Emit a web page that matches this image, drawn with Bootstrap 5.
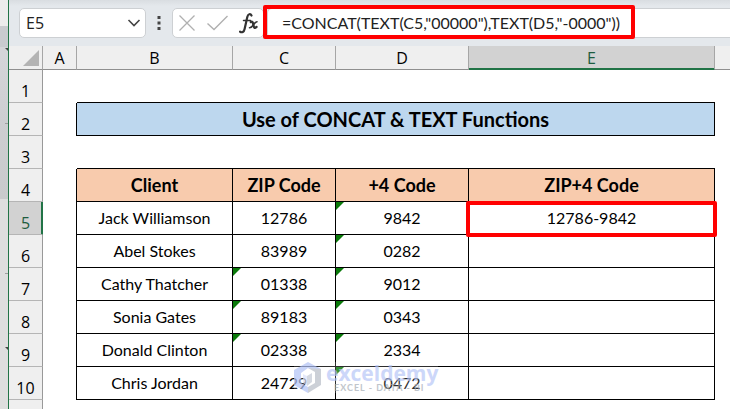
<!DOCTYPE html>
<html lang="en">
<head>
<meta charset="utf-8">
<meta name="viewport" content="width=device-width, initial-scale=1">
<title>Use of CONCAT &amp; TEXT Functions</title>
<link href="https://cdn.jsdelivr.net/npm/bootstrap@5.3.0/dist/css/bootstrap.min.css" rel="stylesheet">
<style>
  body { font-family: Lato, "Liberation Sans", sans-serif; font-size: 16px; line-height: 20px; color: #000; background: #fff; }
  .behind { width: 8px; background: linear-gradient(#ececec 0 26px, #c9cbcf 26px 47px, #d4d5d8 47px 56px, #cdced1 120px, #c9cacc 199px, #dedede 199px); }
  .behind i { position: absolute; right: 0; width: 3px; height: 1px; background: #a0a0a0; }
  .behind i.tip { height: 3px; background: #444; clip-path: polygon(0 0, 100% 0, 100% 100%); }
  .app { border-left: 1px solid #217346; }
  .bar { background: linear-gradient(#d9dde1, #e4e8ec 6px); height: 46px; padding: 8px 0 8px 10px; }
  .field { height: 30px; background: #fff; border: 1px solid #cdd0d3; border-radius: 5px; }
  .namebox { width: 127px; }
  .field input { font-size: 16px; line-height: 20px; color: #222; outline: 0; min-width: 0; }
  .namebox input { font-family: "Open Sans", sans-serif; padding: 0 0 0 6px; }
  .grip { width: 26px; }
  .tools { width: 92px; padding: 0 5px 0 6px; }
  .formula { border-radius: 5px 0 0 5px; margin-left: 3px; }
  .formula input { padding: 0 0 0 14px; }
  .callout { position: absolute; border: 4px solid #f00; border-radius: 2px; pointer-events: none; }
  .formula .callout { left: -5px; top: -4px; width: 372px; height: 34px; }
  .sheet { table-layout: fixed; border-collapse: separate; border-spacing: 0; }
  .sheet th, .sheet td { padding: 0; height: 33px; text-align: center; vertical-align: middle; white-space: nowrap; font-weight: 400; position: relative; }
  .sheet thead th { height: 24px; background: #efefef; border-right: 1px solid #a6a6a6; border-bottom: 1px solid #8f8f8f; font-family: "Open Sans", sans-serif; line-height: 20px; }
  .sheet thead th:last-child { border-right: 0; }
  .sheet tbody th.rownum { background: #efefef; border-right: 1px solid #999; border-bottom: 1px solid #b5b5b5; padding-bottom: 1px; font-family: "Open Sans", sans-serif; vertical-align: bottom; }
  .sheet thead th.on { background: #d2d2d2; color: #1e5c40; border-bottom-color: #217346; box-shadow: inset 0 -1px #217346; }
  .sheet tbody th.on { background: #d2d2d2; color: #1e5c40; border-right-color: #217346; box-shadow: inset -1px 0 #217346; }
  .sheet tbody .rest th, .sheet tbody .rest td { height: 9px; border-bottom: 0; }
  .sheet .cel, .sheet .hd { border-right: 1px solid #000; border-bottom: 1px solid #000; }
  .sheet .over { border-bottom: 1px solid #000; }
  .sheet .side { border-right: 1px solid #000; }
  .sheet .ttl { background: #bdd7ee; border-right: 1px solid #000; border-bottom: 1px solid #000; font-size: 20px; font-weight: 700; }
  .sheet .hd { background: #f8cbad; font-size: 18px; font-weight: 700; }
  .flag::before { content: ""; position: absolute; left: 0; top: 0; border-top: 8px solid #0a7a0a; border-right: 8px solid transparent; }
  .corner svg { position: absolute; right: 3px; bottom: 3px; }
  td .callout { inset: -1px -3px -3px -3px; z-index: 1; }
  .brand { position: absolute; left: 285px; top: 316px; opacity: .72; color: #b9c8f8; background: rgba(255,255,255,.25); pointer-events: none; }
  .brand b { font-family: "Open Sans", sans-serif; font-size: 21px; line-height: 20px; }
  .brand small { font-size: 9px; line-height: 9px; color: #a9afb8; font-weight: 700; letter-spacing: 1px; }
</style>
<script src="https://cdn.jsdelivr.net/npm/bootstrap@5.3.0/dist/js/bootstrap.bundle.min.js"></script>
</head>
<body>
<div class="d-flex min-vh-100 overflow-hidden">
  <div class="behind position-relative flex-shrink-0">
    <i class="tip" style="top:48px"></i><i style="top:123px"></i><i style="top:273px"></i><i class="tip" style="top:347px"></i>
  </div>
  <main class="app flex-grow-1 overflow-hidden">
    <div class="bar d-flex">
      <div class="field namebox d-flex align-items-center flex-shrink-0">
        <input class="border-0 bg-transparent flex-grow-1" aria-label="Name box" value="E5">
        <button class="btn p-0 border-0 d-flex me-1" aria-label="Open name list"><svg width="14" height="8" viewBox="0 0 14 8" fill="none" stroke="#444" stroke-width="1.6"><path d="M1.5 1 7 6.500 12.500 1"/></svg></button>
      </div>
      <div class="grip d-flex justify-content-center align-items-center flex-shrink-0">
        <svg width="4" height="14" fill="#444"><path d="M.5 0h3v3h-3zM.5 5.500h3v3h-3zM.5 11h3v3h-3z"/></svg>
      </div>
      <div class="field tools d-flex align-items-center justify-content-between flex-shrink-0">
        <button class="btn p-0 border-0 d-flex" aria-label="Cancel"><svg width="16" height="16" fill="none" stroke="#b0b0b0" stroke-width="1.3"><path d="M.5.5l15 15M15.500.5l-15 15"/></svg></button>
        <button class="btn p-0 border-0 d-flex" aria-label="Enter"><svg width="21" height="16" fill="none" stroke="#b0b0b0" stroke-width="1.4"><path d="M.5 8.500 7 14.500 20.500 1"/></svg></button>
        <button class="btn p-0 border-0 d-flex" aria-label="Insert function"><svg width="19" height="22" viewBox="0 0 19 22" fill="none" stroke="#333" stroke-linecap="round"><path stroke-width="2.200" d="M12.500 3.500C11.500 1.500 9 1.800 8.300 5L5.600 17C5 20 2.800 21 1 19.600"/><path stroke-width="1.500" d="M4.500 8.500h7"/><path stroke-width="2.300" d="M11.800 10c1.400-1 2.100.2 2.500 2.500.4 3.200 1.300 4.200 3.200 2.400"/><path stroke-width="1.600" d="M18 9.800c-3 0-4.200 6.200-7.500 5.900"/></svg></button>
      </div>
      <div class="field formula position-relative d-flex align-items-center flex-grow-1 border-end-0">
        <input class="border-0 bg-transparent flex-grow-1" aria-label="Formula bar" value="=CONCAT(TEXT(C5,&quot;00000&quot;),TEXT(D5,&quot;-0000&quot;))">
        <span class="callout"></span>
      </div>
    </div>
    <div class="position-relative">
      <table class="sheet w-100">
        <colgroup><col style="width:34px"><col style="width:34px"><col style="width:156px"><col style="width:103px"><col style="width:133px"><col style="width:246px"><col></colgroup>
        <thead><tr><th class="corner"><svg width="16" height="16" fill="#b3b3b3"><path d="M16 0v16H0z"/></svg></th><th>A</th><th>B</th><th>C</th><th>D</th><th class="on">E</th><th></th></tr></thead>
        <tbody>
          <tr><th class="rownum">1</th><td></td><td class="over" colspan="4"></td><td></td></tr>
          <tr><th class="rownum">2</th><td class="side"></td><td class="ttl" colspan="4">Use of CONCAT &amp; TEXT Functions</td><td></td></tr>
          <tr><th class="rownum">3</th><td></td><td class="over" colspan="4"></td><td></td></tr>
          <tr><th class="rownum">4</th><td class="side"></td><th class="hd">Client</th><th class="hd">ZIP Code</th><th class="hd">+4 Code</th><th class="hd">ZIP+4 Code</th><td></td></tr>
          <tr><th class="rownum on">5</th><td class="side"></td><td class="cel">Jack Williamson</td><td class="cel">12786</td><td class="cel flag">9842</td><td class="cel">12786-9842<span class="callout"></span></td><td></td></tr>
          <tr><th class="rownum">6</th><td class="side"></td><td class="cel">Abel Stokes</td><td class="cel">83989</td><td class="cel flag">0282</td><td class="cel"></td><td></td></tr>
          <tr><th class="rownum">7</th><td class="side"></td><td class="cel">Cathy Thatcher</td><td class="cel flag">01338</td><td class="cel flag">9012</td><td class="cel"></td><td></td></tr>
          <tr><th class="rownum">8</th><td class="side"></td><td class="cel">Sonia Gates</td><td class="cel flag">89183</td><td class="cel flag">0343</td><td class="cel"></td><td></td></tr>
          <tr><th class="rownum">9</th><td class="side"></td><td class="cel">Donald Clinton</td><td class="cel flag">02338</td><td class="cel flag">2334</td><td class="cel"></td><td></td></tr>
          <tr><th class="rownum">10</th><td class="side"></td><td class="cel">Chris Jordan</td><td class="cel">24729</td><td class="cel flag">0472</td><td class="cel"></td><td></td></tr>
          <tr class="rest"><th class="rownum"></th><td colspan="6"></td></tr>
        </tbody>
      </table>
      <div class="brand d-flex align-items-center gap-1">
        <svg width="28" height="31" viewBox="0 0 28 31"><path fill="#b4c4f6" d="M14 0 27 7v4L14 6 7 11v10l7 4v6L0 23V8z"/><path fill="#b9bec8" d="M27 7v16l-13 8v-6l7-4V10l-7-4z"/><path fill="#c6cbd6" d="M13 14l5-3v9l-5 4z"/><path fill="#dce3fa" d="M9 12l4 2v10l-4-3z"/></svg>
        <div class="d-flex flex-column"><b>exceldemy</b><small class="ms-2">EXCEL - DATA - BI</small></div>
      </div>
    </div>
  </main>
</div>
</body>
</html>
